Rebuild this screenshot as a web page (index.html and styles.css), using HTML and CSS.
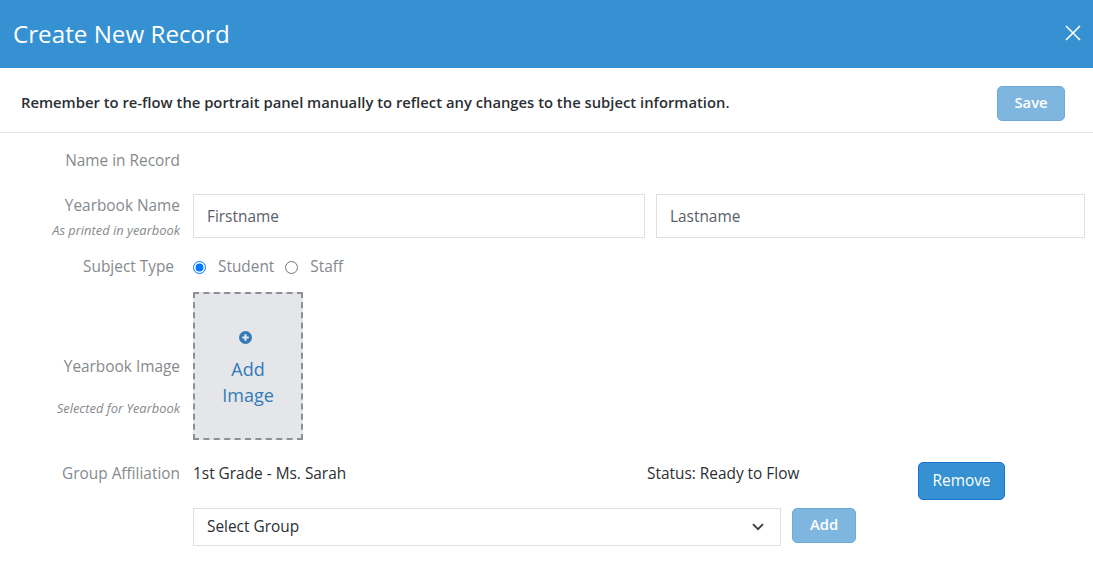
FILE: index.html
```html
<!DOCTYPE html>
<html lang="en">
<head>
<meta charset="utf-8">
<title>Create New Record</title>
<link rel="stylesheet" href="styles.css">
</head>
<body>
<div class="modal">
  <header class="modal-head">
    <h1 class="modal-title">Create New Record</h1>
    <button class="close" aria-label="Close">
      <svg width="16" height="16" viewBox="0 0 16 16"><path d="M1 1 15 15M15 1 1 15" stroke="#fff" stroke-width="1.6" fill="none"/></svg>
    </button>
  </header>
  <div class="notice">
    <p class="notice-text">Remember to re-flow the portrait panel manually to reflect any changes to the subject information.</p>
    <button class="btn btn-off btn-save">Save</button>
  </div>
  <form class="form">
    <div class="row row-record">
      <div class="label-col"><span class="label">Name in Record</span></div>
    </div>
    <div class="row row-name">
      <div class="label-col">
        <span class="label">Yearbook Name</span>
        <span class="hint">As printed in yearbook</span>
      </div>
      <div class="name-fields">
        <input class="input input-first" placeholder="Firstname">
        <input class="input input-last" placeholder="Lastname">
      </div>
    </div>
    <div class="row row-type">
      <div class="label-col type-label"><span class="label">Subject Type</span></div>
      <div class="radios">
        <label class="radio radio-student"><input type="radio" name="t" checked><span>Student</span></label>
        <label class="radio"><input type="radio" name="t"><span>Staff</span></label>
      </div>
    </div>
    <div class="row row-image">
      <div class="label-col image-label">
        <span class="label">Yearbook Image</span>
        <span class="hint">Selected for Yearbook</span>
      </div>
      <div class="dropzone">
        <svg class="plus" width="13" height="13" viewBox="0 0 13 13"><circle cx="6.5" cy="6.5" r="6.5" fill="#337ab7"/><path d="M6.5 3.2v6.6M3.2 6.5h6.6" stroke="#e4e6e9" stroke-width="2.2"/></svg>
        <span class="add-text">Add<br>Image</span>
      </div>
    </div>
    <div class="row row-group">
      <div class="label-col"><span class="label">Group Affiliation</span></div>
      <div class="group-name">1st Grade - Ms. Sarah</div>
      <div class="group-status">Status: Ready to Flow</div>
      <button type="button" class="btn btn-on btn-remove">Remove</button>
    </div>
    <div class="row row-select">
      <div class="select-wrap">
        <select class="select"><option>Select Group</option></select>
        <svg class="chev" width="12" height="8" viewBox="0 0 12 8"><path d="M1 1.2 6 6.2 11 1.2" stroke="#343a40" stroke-width="1.8" fill="none"/></svg>
      </div>
      <button type="button" class="btn btn-off btn-add">Add</button>
    </div>
  </form>
</div>
</body>
</html>
```
FILE: styles.css
```css
* { box-sizing: border-box; }
html, body { margin: 0; height: 100%; background: #fff; overflow: hidden; }
body { font-family: "Open Sans", "Liberation Sans", sans-serif; font-size: 15.4px; color: #2b2f33; }
.modal-head { height: 68px; background: #3591d1; display: flex; align-items: center; justify-content: space-between; padding: 0 13px; }
.modal-title { margin: 0; font-size: 24.2px; font-weight: 400; color: #fff; line-height: 1.2; }
.close { background: none; border: 0; padding: 0; display: flex; margin-right: -1px; margin-top: -2px; }
.notice { height: 65px; border-bottom: 1px solid #e4e6e9; display: flex; align-items: center; justify-content: space-between; padding: 0 28px 0 21px; }
.notice-text { margin: 3px 0 0; font-size: 14.8px; font-weight: 600; color: #2b2f33; }
.btn { font-family: inherit; font-size: 15.4px; color: #fff; border-radius: 5px; padding: 0; line-height: 1; }
.btn-off { background: #7fb6e0; border: 1px solid #6fa9d8; font-weight: 600; font-size: 14.8px; }
.btn-on { background: #3591d1; border: 1px solid #1a73d0; }
.btn-save { width: 68px; height: 35px; margin-top: 7px; padding-bottom: 2px; }
.form { display: flex; flex-direction: column; }
.row { display: flex; }
.label-col { width: 180px; flex: none; display: flex; flex-direction: column; align-items: flex-end; }
.label { font-size: 15.4px; color: #868a8e; line-height: 20px; }
.hint { font-size: 12.9px; font-style: italic; color: #868a8e; line-height: 15px; }
.row-record { padding-top: 18px; height: 61px; }
.row-name { height: 44px; }
.row-name .label-col { padding-top: 2px; }
.row-name .hint { margin-top: 7px; }
.name-fields { display: flex; margin-left: 13px; gap: 11px; }
.input { height: 44px; border: 1px solid #dcdfe3; padding: 0 13px; font: inherit; background: #fff; }
.input::placeholder { color: #5a6066; opacity: 1; }
.input-first { width: 452px; }
.input-last { width: 429px; }
.row-type { height: 55px; padding-top: 19px; }
.type-label { width: 174px; }
.radios { display: flex; margin-left: 19px; height: 20px; align-items: center; }
.radio { display: flex; align-items: center; color: #868a8e; line-height: 20px; }
.radio input { margin: 0 12px 0 0; width: 13px; height: 13px; }
.radio-student { margin-right: 11px; }
.row-image { height: 148px; margin-top: -1px; }
.image-label { padding-top: 65px; }
.image-label .hint { margin-top: 24px; }
.dropzone { margin-left: 13px; width: 110px; height: 148px; background: #e4e6e9; border: 2px dashed #8d8f92; display: flex; flex-direction: column; align-items: center; color: #337ab7; padding-top: 37px; }
.plus { margin-left: -5px; }
.add-text { display: block; margin-top: 12px; font-size: 18px; line-height: 26px; text-align: center; }
.row-group { height: 46px; margin-top: 22px; align-items: flex-start; }
.row-group .label-col { padding-top: 2px; }
.group-name { margin-left: 13px; width: 454px; padding-top: 2px; line-height: 20px; }
.group-status { width: 271px; padding-top: 2px; line-height: 20px; }
.btn-remove { width: 87px; height: 38px; }
.row-select { margin-top: 0; padding-left: 193px; gap: 11px; align-items: flex-start; }
.select-wrap { position: relative; width: 588px; height: 38px; }
.select { appearance: none; width: 100%; height: 100%; border: 1px solid #dcdfe3; background: #fff; padding: 0 13px 2px; font: inherit; color: #2b2f33; border-radius: 0; }
.chev { position: absolute; right: 17px; top: 15px; }
.btn-add { width: 64px; height: 35px; padding-bottom: 3px; }
```
